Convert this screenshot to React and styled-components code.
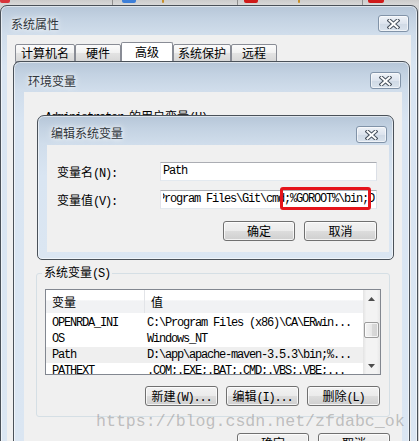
import React from "react";
import styled, { createGlobalStyle } from "styled-components";

const CJK = `"Noto Sans CJK SC", "Noto Sans", sans-serif`;
const MONO = `"Liberation Mono", "Noto Sans CJK SC", monospace`;

const GlobalStyle = createGlobalStyle`
  html, body { margin: 0; padding: 0; background: #d4d4d4; }
  body { font-family: ${CJK}; font-size: 12px; color: #000; }
  * { box-sizing: border-box; }
`;

const Desktop = styled.div`
  position: relative;
  width: 419px;
  height: 441px;
  overflow: hidden;
  background: #d4d4d4;
`;

const BrowserStrip = styled.div`
  display: flex;
  align-items: flex-start;
  height: 5px;
  background: linear-gradient(#cccccc, #d9d9d9);
`;

const StripMark = styled.span`
  flex: none;
  margin-left: ${(p) => p.$ml}px;
  width: ${(p) => p.$w}px;
  height: ${(p) => p.$h}px;
  background: ${(p) => p.$c};
  border-radius: 0 0 2px 2px;
`;

const Window = styled.div`
  position: absolute;
  left: ${(p) => p.$left}px;
  top: ${(p) => p.$top}px;
  width: ${(p) => p.$width}px;
  height: ${(p) => p.$height}px;
  z-index: ${(p) => p.$z};
  display: flex;
  flex-direction: column;
  border: 1px solid #4a5159;
  border-radius: ${(p) => (p.$roundBottom ? "7px 7px 5px 5px" : "7px 7px 0 0")};
  background: linear-gradient(
    to bottom,
    #b6c6d8 0px,
    #c3d2e2 12px,
    #d0ddeb 28px,
    #d9e5f2 60px,
    #dbe6f2 100%
  );
  box-shadow: inset 0 0 0 1px rgba(255, 255, 255, 0.55);
`;

const TitleBar = styled.div`
  flex: none;
  height: ${(p) => p.$h}px;
  display: flex;
  justify-content: space-between;
  align-items: flex-start;
  padding: 0 ${(p) => p.$pr}px 0 ${(p) => p.$pl}px;
`;

const Title = styled.span`
  margin-top: ${(p) => p.$mt}px;
  font-family: ${CJK};
  font-size: 12px;
  line-height: 16px;
  color: #30353b;
  text-shadow: 0 0 4px #ffffff, 0 0 8px rgba(255, 255, 255, 0.8);
`;

const CloseButton = styled.div`
  margin-top: ${(p) => p.$mt}px;
  width: 31px;
  height: 17px;
  display: flex;
  align-items: center;
  justify-content: center;
  border: 1px solid #8193a8;
  border-radius: 3px;
  background: linear-gradient(#eef2f7, #dde4ee 50%, #cfd9e5 51%, #dae3ed);
  box-shadow: inset 0 0 0 1px rgba(255, 255, 255, 0.6);
`;

const Client = styled.div`
  flex: 1;
  min-height: 0;
  margin: 0 ${(p) => p.$mr}px ${(p) => p.$mb || 0}px ${(p) => p.$ml}px;
  background: #f0f0f0;
  display: flex;
  flex-direction: column;
  padding: ${(p) => p.$pad || "0"};
`;

const Mono = styled.span`
  font-family: ${MONO};
  font-size: 12px;
  letter-spacing: -1.2px;
`;

/* ---------- tabs ---------- */
const TabRow = styled.div`
  flex: none;
  display: flex;
  align-items: flex-end;
  height: 27px;
  padding: 6px 0 0 8px;
`;

const Tab = styled.div`
  flex: none;
  width: ${(p) => p.$w}px;
  height: ${(p) => (p.$sel ? 21 : 18)}px;
  margin-bottom: ${(p) => (p.$sel ? -1 : 0)}px;
  position: relative;
  z-index: ${(p) => (p.$sel ? 1 : 0)};
  border: 1px solid #898c95;
  border-bottom: ${(p) => (p.$sel ? "none" : "1px solid #898c95")};
  border-radius: 2px 2px 0 0;
  background: ${(p) =>
    p.$sel
      ? "#ffffff"
      : "linear-gradient(#fbfbfb, #f1f1f1 50%, #e3e3e3 51%, #d8d8d8)"};
  font-family: ${CJK};
  font-size: 12px;
  line-height: ${(p) => (p.$sel ? 18 : 16)}px;
  text-align: center;
  color: #000;
`;

const TabPanel = styled.div`
  flex: 1;
  margin: 0 6px 0 8px;
  border: 1px solid #898c95;
  background: #ffffff;
`;

/* ---------- env window contents ---------- */
const UserLabel = styled.div`
  flex: none;
  margin: 17px 0 0 21px;
  height: 14px;
  line-height: 14px;
  white-space: nowrap;
`;

const UserSection = styled.div`
  flex: none;
  height: 142px;
  padding: 8px 21px 0 21px;
  display: flex;
  flex-direction: column;
`;

const GroupBox = styled.fieldset`
  flex: none;
  margin: 0 12px;
  padding: 0 8px 10px 8px;
  min-width: 0;
  border: 1px solid #d5dfe5;
  border-radius: 3px;
`;

const GroupLegend = styled.legend`
  margin-left: -3px;
  padding: 0 2px;
  font-family: ${CJK};
  font-size: 12px;
  line-height: 14px;
  color: #000;
`;

const ListBox = styled.div`
  height: 86px;
  margin-top: 8px;
  border: 1px solid #828790;
  background: #ffffff;
  display: flex;
  overflow: hidden;
`;

const ListMain = styled.div`
  flex: 1;
  min-width: 0;
  display: flex;
  flex-direction: column;
  overflow: hidden;
`;

const ListHeader = styled.div`
  flex: none;
  height: 23px;
  display: grid;
  grid-template-columns: 99px 1fr;
  background: linear-gradient(#ffffff 0, #ffffff 45%, #f1f2f4 46%, #f1f2f4 100%);
  margin-bottom: 2px;
`;

const HeaderCell = styled.div`
  padding-left: 6px;
  line-height: 23px;
  font-family: ${CJK};
  font-size: 12px;
  border-right: ${(p) => (p.$sep ? "1px solid #e2e4e8" : "none")};
`;

const ListRow = styled.div`
  flex: none;
  height: 16px;
  display: grid;
  grid-template-columns: 99px 1fr;
  background: ${(p) => (p.$sel ? "#efefef" : "transparent")};
  font-family: ${MONO};
  font-size: 12px;
  letter-spacing: -1.2px;
  line-height: 16px;
  white-space: nowrap;
`;

const RowCell = styled.div`
  overflow: hidden;
  padding-left: ${(p) => p.$pl}px;
`;

const ScrollBar = styled.div`
  flex: none;
  width: 17px;
  display: flex;
  flex-direction: column;
  background: linear-gradient(to right, #e3e3e3, #f3f3f3 20%, #f3f3f3 80%, #e8e8e8);
`;

const ScrollArrow = styled.div`
  flex: none;
  height: 17px;
  display: flex;
  align-items: center;
  justify-content: center;
`;

const ScrollTrack = styled.div`
  flex: 1;
  padding: 15px 1px 0 1px;
`;

const ScrollThumb = styled.div`
  height: 16px;
  border: 1px solid #9b9b9b;
  border-radius: 2px;
  background: linear-gradient(to right, #f4f4f4, #e8e8e8 50%, #d9d9d9 51%, #d3d3d3);
  box-shadow: inset 0 0 0 1px rgba(255, 255, 255, 0.7);
`;

const ButtonRow = styled.div`
  flex: none;
  display: flex;
  justify-content: flex-end;
  gap: ${(p) => p.$gap}px;
  margin-top: ${(p) => p.$mt}px;
  padding-right: ${(p) => p.$pr || 0}px;
`;

const Button = styled.div`
  flex: none;
  width: ${(p) => p.$w}px;
  height: 20px;
  border: 1px solid #707070;
  border-radius: 3px;
  background: linear-gradient(#f2f2f2 0%, #ebebeb 49%, #dddddd 50%, #cfcfcf 100%);
  box-shadow: inset 0 0 0 1px rgba(255, 255, 255, 0.75);
  font-family: ${CJK};
  font-size: 12px;
  line-height: 18px;
  text-align: center;
  white-space: nowrap;
  color: #000;
`;

/* ---------- edit dialog contents ---------- */
const FieldRow = styled.div`
  flex: none;
  display: flex;
  align-items: center;
  height: 19px;
  margin-top: ${(p) => p.$mt}px;
`;

const FieldLabel = styled.div`
  flex: none;
  width: 103px;
  font-family: ${CJK};
  font-size: 12px;
  white-space: nowrap;
`;

const InputWrap = styled.div`
  position: relative;
  flex: none;
  width: 217px;
  height: 19px;
`;

const Input = styled.div`
  height: 19px;
  border: 1px solid;
  border-color: #abadb3 #dbdfe6 #e3e9ef #e2e3ea;
  background: #ffffff;
  padding: 0 0 0 2px;
`;

const InputText = styled.div`
  overflow: hidden;
  white-space: nowrap;
  font-family: ${MONO};
  font-size: 12px;
  letter-spacing: -1.2px;
  line-height: 17px;
  text-indent: ${(p) => p.$indent || 0}px;
`;

const RedMark = styled.div`
  position: absolute;
  left: 120px;
  top: -3px;
  width: 91px;
  height: 23px;
  border: 3px solid #e5141b;
  border-radius: 3px;
  pointer-events: none;
`;

const Watermark = styled.div`
  position: absolute;
  left: 96px;
  top: 412px;
  z-index: 10;
  font-family: "Liberation Mono", monospace;
  font-size: 16.6px;
  line-height: 20px;
  color: rgba(110, 110, 110, 0.4);
  white-space: nowrap;
`;

const CloseIcon = () => (
  <svg width="13" height="10" viewBox="0 0 13 10">
    <path d="M2.5 1.5 L10.5 8.5 M10.5 1.5 L2.5 8.5" stroke="#46505c" strokeWidth="4" strokeLinecap="square" fill="none" />
    <path d="M2.5 1.5 L10.5 8.5 M10.5 1.5 L2.5 8.5" stroke="#ffffff" strokeWidth="2" strokeLinecap="square" fill="none" />
  </svg>
);

const Arrow = ({ up }) => (
  <svg width="7" height="4" viewBox="0 0 7 4">
    <polygon points={up ? "0,4 7,4 3.5,0" : "0,0 7,0 3.5,4"} fill="#4d4d4d" />
  </svg>
);

const stripMarks = [
  { ml: 0, w: 10, h: 3, c: "#d8343a" },
  { ml: 102, w: 1, h: 5, c: "#8e8e8e" },
  { ml: 9, w: 14, h: 3, c: "#3d7fd8" },
  { ml: 26, w: 2, h: 3, c: "#c8902a" },
  { ml: 73, w: 1, h: 5, c: "#8e8e8e" },
  { ml: 6, w: 14, h: 3, c: "#cf1a1a" },
  { ml: 40, w: 2, h: 3, c: "#c8902a" },
  { ml: 62, w: 1, h: 5, c: "#8e8e8e" },
  { ml: 5, w: 16, h: 3, c: "#cf1a1a" },
];

const tabs = [
  { label: "计算机名", w: 60 },
  { label: "硬件", w: 46 },
  { label: "高级", w: 52, sel: true },
  { label: "系统保护", w: 58 },
  { label: "远程", w: 46 },
];

const sysVars = [
  { name: "OPENRDA_INI", value: "C:\\Program Files (x86)\\CA\\ERwin..." },
  { name: "OS", value: "Windows_NT" },
  { name: "Path", value: "D:\\app\\apache-maven-3.5.3\\bin;%...", sel: true },
  { name: "PATHEXT", value: ".COM;.EXE;.BAT;.CMD;.VBS;.VBE;..." },
];

const VarList = ({ rows }) => (
  <ListBox>
    <ListMain>
      <ListHeader>
        <HeaderCell $sep>变量</HeaderCell>
        <HeaderCell>值</HeaderCell>
      </ListHeader>
      {rows.map((r) => (
        <ListRow key={r.name} $sel={r.sel}>
          <RowCell $pl={6}>{r.name}</RowCell>
          <RowCell $pl={2}>{r.value}</RowCell>
        </ListRow>
      ))}
    </ListMain>
    <ScrollBar>
      <ScrollArrow>
        <Arrow up />
      </ScrollArrow>
      <ScrollTrack>
        <ScrollThumb />
      </ScrollTrack>
      <ScrollArrow>
        <Arrow />
      </ScrollArrow>
    </ScrollBar>
  </ListBox>
);

export default function App() {
  return (
    <>
      <GlobalStyle />
      <Desktop>
        <BrowserStrip>
          {stripMarks.map((m, i) => (
            <StripMark key={i} $ml={m.ml} $w={m.w} $h={m.h} $c={m.c} />
          ))}
        </BrowserStrip>

        {/* 系统属性 */}
        <Window $left={0} $top={5} $width={418} $height={470} $z={1}>
          <TitleBar $h={29} $pl={10} $pr={8}>
            <Title $mt={10}>系统属性</Title>
            <CloseButton $mt={9}>
              <CloseIcon />
            </CloseButton>
          </TitleBar>
          <Client $ml={6} $mr={6}>
            <TabRow>
              {tabs.map((t) => (
                <Tab key={t.label} $w={t.w} $sel={t.sel}>
                  {t.label}
                </Tab>
              ))}
            </TabRow>
            <TabPanel />
          </Client>
        </Window>

        {/* 环境变量 */}
        <Window $left={13} $top={61} $width={397} $height={420} $z={2}>
          <TitleBar $h={30} $pl={14} $pr={8}>
            <Title $mt={11}>环境变量</Title>
            <CloseButton $mt={10}>
              <CloseIcon />
            </CloseButton>
          </TitleBar>
          <Client $ml={10} $mr={7}>
            <UserLabel>
              <Mono>Administrator </Mono>的用户变量<Mono>(U)</Mono>
            </UserLabel>
            <UserSection>
              <VarList rows={[]} />
            </UserSection>
            <GroupBox>
              <GroupLegend>
                系统变量<Mono>(S)</Mono>
              </GroupLegend>
              <VarList rows={sysVars} />
              <ButtonRow $gap={8} $mt={11} $pr={1}>
                <Button $w={73}>
                  新建<Mono>(W)...</Mono>
                </Button>
                <Button $w={73}>
                  编辑<Mono>(I)...</Mono>
                </Button>
                <Button $w={73}>
                  删除<Mono>(L)</Mono>
                </Button>
              </ButtonRow>
            </GroupBox>
            <ButtonRow $gap={9} $mt={16} $pr={12}>
              <Button $w={72}>确定</Button>
              <Button $w={72}>取消</Button>
            </ButtonRow>
          </Client>
        </Window>

        {/* 编辑系统变量 */}
        <Window $left={37} $top={115} $width={357} $height={145} $z={3} $roundBottom>
          <TitleBar $h={29} $pl={13} $pr={6}>
            <Title $mt={9}>编辑系统变量</Title>
            <CloseButton $mt={10}>
              <CloseIcon />
            </CloseButton>
          </TitleBar>
          <Client $ml={9} $mr={4} $mb={7} $pad="0 12px 0 10px">
            <FieldRow $mt={17}>
              <FieldLabel>
                变量名<Mono>(N):</Mono>
              </FieldLabel>
              <InputWrap>
                <Input>
                  <InputText>Path</InputText>
                </Input>
              </InputWrap>
            </FieldRow>
            <FieldRow $mt={9}>
              <FieldLabel>
                变量值<Mono>(V):</Mono>
              </FieldLabel>
              <InputWrap>
                <Input>
                  <InputText $indent={-5}>Program Files\Git\cmd;%GOROOT%\bin;D:\app</InputText>
                </Input>
                <RedMark />
              </InputWrap>
            </FieldRow>
            <ButtonRow $gap={9} $mt={12} $pr={0}>
              <Button $w={72}>确定</Button>
              <Button $w={73}>取消</Button>
            </ButtonRow>
          </Client>
        </Window>

        <Watermark>https://blog.csdn.net/zfdabc_ok</Watermark>
      </Desktop>
    </>
  );
}
